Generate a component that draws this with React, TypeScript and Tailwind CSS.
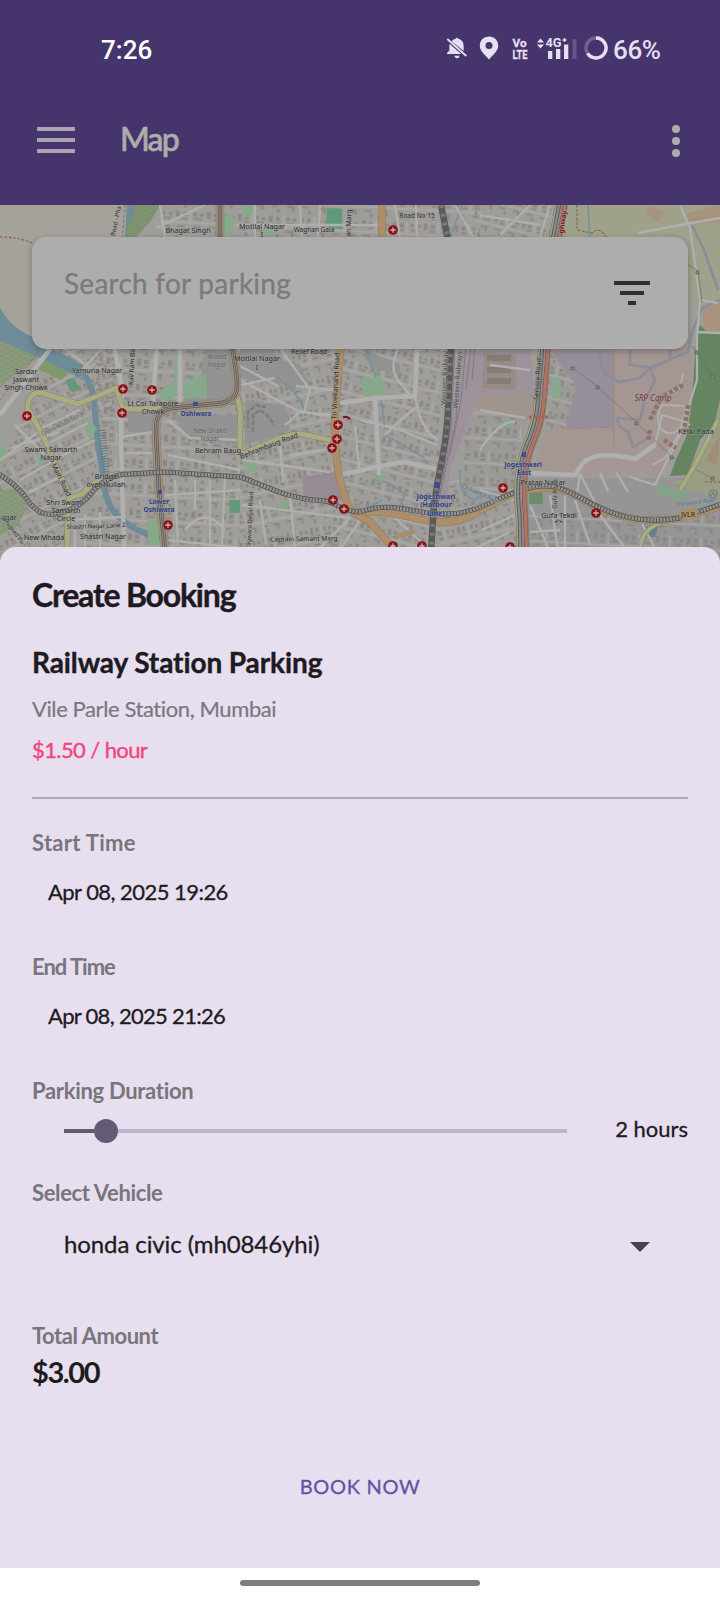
import React from "react";

type Pt = [number, number];

const HOSPITALS: Pt[] = [
  [393, 230], [123, 389], [152, 390], [122, 413], [27, 416], [338, 425], [337, 439], [332, 448],
  [333, 500], [344, 509], [168, 525], [503, 488], [596, 513], [393, 546], [422, 546], [510, 547],
];

type Label = { t: string; x: number; y: number; r?: number; s?: number; c?: string; b?: boolean; i?: boolean };

const DARK = "#2b2b2e";
const BLUE = "#2f3c86";
const MUTED = "#5f5f66";

const LABELS: Label[] = [
  { t: "Bhagat Singh", x: 188, y: 233 },
  { t: "Motilal Nagar", x: 262, y: 229 },
  { t: "I", x: 262, y: 237 },
  { t: "Wagnan Gala", x: 314, y: 232, s: 6.5 },
  { t: "Road No 15", x: 417, y: 218, s: 6.5 },
  { t: "Road - Pha", x: 116, y: 223, r: -78, s: 6 },
  { t: "an Marg", x: 349, y: 225, r: -88, s: 7 },
  { t: "ghway", x: 563, y: 224, r: -82, s: 7, c: "#7a1f22", b: true },
  { t: "Anand", x: 217, y: 359, s: 6.5, c: MUTED, i: true },
  { t: "Nagar", x: 217, y: 367, s: 6.5, c: MUTED, i: true },
  { t: "Relief Road", x: 309, y: 354, s: 6.8 },
  { t: "Motilal Nagar", x: 257, y: 361 },
  { t: "I", x: 257, y: 370 },
  { t: "Sardar", x: 26, y: 374 },
  { t: "Jaswant", x: 26, y: 382 },
  { t: "Singh Chowk", x: 26, y: 390 },
  { t: "Yamuna Nagar", x: 97, y: 373 },
  { t: "Kav Ram Ba", x: 132, y: 369, r: -87, s: 6.5 },
  { t: "Lt Col Tarapore", x: 153, y: 406 },
  { t: "Chowk", x: 153, y: 414 },
  { t: "Oshiwara", x: 196, y: 416, c: BLUE, b: true, s: 6.6 },
  { t: "Cross Road No 3", x: 62, y: 426, r: -27, s: 6, c: MUTED },
  { t: "New Shakti", x: 210, y: 433, s: 6.5, c: MUTED },
  { t: "Nagar", x: 210, y: 441, s: 6.5, c: MUTED },
  { t: "Behram Baug", x: 218, y: 453 },
  { t: "Swami Samarth", x: 51, y: 452 },
  { t: "Nagar", x: 51, y: 460 },
  { t: "Main Road", x: 61, y: 482, r: 64, s: 7.2 },
  { t: "Bridge", x: 106, y: 479 },
  { t: "over Nullah", x: 106, y: 487 },
  { t: "Behrambaug Road", x: 269, y: 448, r: -21, s: 7 },
  { t: "Tn Vivekanand Road", x: 336, y: 388, r: -87, s: 7 },
  { t: "Shri Swami", x: 65, y: 505 },
  { t: "Samarth", x: 66, y: 513 },
  { t: "Circle", x: 66, y: 521 },
  { t: "agar", x: 9, y: 520 },
  { t: "Lower", x: 159, y: 504, c: BLUE, b: true, s: 6.6 },
  { t: "Oshiwara", x: 159, y: 512, c: BLUE, b: true, s: 6.6 },
  { t: "Shastri Nagar Lane 2", x: 96, y: 528, r: -2, s: 6 },
  { t: "New Mhada", x: 44, y: 540 },
  { t: "Shastri Nagar", x: 103, y: 539 },
  { t: "Janupied Pu", x: 13, y: 532, r: 53, s: 6 },
  { t: "agwara Desai Road", x: 250, y: 521, r: -87, s: 6 },
  { t: "Captain Samant Marg", x: 304, y: 541, r: -1, s: 6.6 },
  { t: "Western Railway", x: 445, y: 380, r: -88, s: 7, c: "#4b4b50" },
  { t: "Western Railways", x: 458, y: 382, r: -86, s: 7, c: "#4b4b50" },
  { t: "Jogeshwari", x: 436, y: 499, c: BLUE, b: true, s: 7 },
  { t: "(Harbour", x: 436, y: 507, c: BLUE, b: true, s: 7 },
  { t: "Line)", x: 436, y: 516, c: BLUE, b: true, s: 7 },
  { t: "Jogeshwari", x: 523, y: 467, c: BLUE, b: true, s: 6.8 },
  { t: "East", x: 524, y: 475, c: BLUE, b: true, s: 6.8 },
  { t: "Service Road", x: 538, y: 381, r: -86, s: 7 },
  { t: "Oshiwara River", x: 481, y: 496, r: 24, s: 6, c: "#48718f", i: true },
  { t: "Pratap Nagar", x: 543, y: 485 },
  { t: "Gufa Road", x: 555, y: 496, r: -88, s: 6 },
  { t: "Gufa Tekdi", x: 559, y: 518 },
  { t: "SRP Camp", x: 653, y: 401, c: "#7d3032", i: true, s: 8.2 },
  { t: "Ketki Pada", x: 696, y: 434 },
  { t: "Oshiwara River", x: 696, y: 504, r: -7, s: 6, c: "#48718f", i: true },
];

/** Street grid with irregular building footprints, used as a district texture. */
function Blocks({ id, angle, w, h }: { id: string; angle: number; w: number; h: number }) {
  return (
    <pattern id={id} width={w} height={h} patternUnits="userSpaceOnUse" patternTransform={`rotate(${angle})`}>
      <path d={`M0 ${h / 2}H${w}M${w / 2} 0V${h / 2}`} stroke="#a9a9a8" strokeWidth="1.5" />
      <g fill="#8c8782">
        <rect x="1" y="1" width={w * 0.12} height={h * 0.26} />
        <rect x={w * 0.26} y="2" width={w * 0.12} height={h * 0.16} />
        <rect x={w * 0.24} y={h * 0.31} width={w * 0.17} height={h * 0.08} />
        <rect x={w * 0.6} y="2" width={w * 0.1} height={h * 0.14} />
        <rect x={w * 0.8} y="3" width={w * 0.12} height={h * 0.11} />
        <rect x={w * 0.62} y={h * 0.3} width={w * 0.25} height={h * 0.08} />
        <rect x="3" y={h * 0.62} width={w * 0.23} height={h * 0.07} />
        <rect x={w * 0.28} y={h * 0.77} width={w * 0.09} height={h * 0.14} />
        <path d={`M${w * 0.6} ${h * 0.62}h${w * 0.25}v${h * 0.22}h-${w * 0.08}v-${h * 0.14}h-${w * 0.17}z`} />
      </g>
    </pattern>
  );
}

function Road({ d, c, w, edge = "#817e74" }: { d: string; c: string; w: number; edge?: string }) {
  return (
    <>
      <path d={d} stroke={edge} strokeWidth={w + 1} />
      <path d={d} stroke={c} strokeWidth={w} />
    </>
  );
}

function Metro({ d, w = 5 }: { d: string; w?: number }) {
  return (
    <>
      <path d={d} stroke="#4f4f4f" strokeWidth={w} />
      <path d={d} stroke="#969696" strokeWidth={w - 1.4} />
      <path d={d} stroke="#565656" strokeWidth={w - 1.6} strokeDasharray="1.2 2" />
    </>
  );
}

function CityMap() {
  const west = "M220 205V237M232 345L236 372C239 392 236 400 222 403L172 408C158 410 156 418 156 432L159 492L165 550";
  const svRoad = "M382 205V242L341 346L335 415C334 455 338 480 348 505Q353 514 372 512C405 512 420 523 446 522C478 521 490 499 520 492C548 485 560 487 580 498C612 518 640 523 676 519L722 506";
  const metro = "M-2 474Q12 481 24 495Q37 517 54 514Q76 511 90 495Q106 474 130 474L165 472L240 477C268 486 285 499 325 501C338 504 345 512 360 512C395 500 415 515 445 514C478 514 494 498 520 491C550 479 566 490 590 503C622 520 650 523 680 518L722 504";
  const highway = "M562 203L555 240L545 345L540 405Q538 425 529 445C520 468 519 490 522 515L523 550";
  const major = "M114 345L122 390L121 440L124 550M157 345L153 402M180 345V402M50 349L0 415M340 403L375 398L415 396L417 350M375 398L379 475M340 475L380 466L405 462L436 469M530 473L575 475L583 463Q596 450 635 459L655 445";
  const white = [
    "M122 437L152 432M125 453H155M125 412V405",
    "M205 205L156 228M160 205L165 237M300 205L302 237M320 205L318 237M255 205V237M236 225H380",
    "M415 396Q420 430 438 440M335 415L300 412L240 380",
    "M415 408L395 425L385 435M360 420L400 430L437 445M355 425L359 470",
    "M278 345L310 390L304 412L335 417M275 378L240 385M240 366L278 386M302 410L285 425M296 386L333 390",
    "M243 460L330 472M280 440L283 482M290 455L325 450M242 505L350 518L320 548M260 500L266 545M290 497L295 550",
    "M360 520L340 550M395 518L430 550M400 345Q388 368 398 380L410 395",
    "M395 205L400 237M416 205L417 237M455 205L475 240M480 215L540 225M550 205L540 237M500 235L530 205",
    "M480 410L525 418M480 450Q500 420 515 422M482 530L515 515M478 547L510 532M480 490L515 500M490 365L530 370",
    "M530 505L548 548M550 495L558 550M565 495V550M575 500L590 545M530 532L560 530M600 515L625 548M580 474L600 512M640 520L655 548",
    "M655 445L662 415L680 420L690 425M600 473L608 491M616 472L628 492M580 475L576 500",
    "M637 233L720 218M680 205L690 228L700 300L718 303M700 300L697 335L697 380L680 435L655 485M697 332L720 333M655 485L630 477",
    "M168 420L190 438L240 440M168 455L240 470M175 480L178 545M195 480V510M210 480V550M225 478L222 545M168 540L240 548M165 495L240 490M185 530Q205 505 225 530",
    "M60 345L95 372M105 345L80 372M38 430L80 410M45 445L88 423M53 460L95 440M20 480L55 460M30 492L62 476M68 520L122 517M75 530V550M85 515V550M100 512V550M10 448L60 432M15 425L45 455M0 460L38 432",
  ].join("");

  return (
    <svg className="block h-[362px] w-[720px]" viewBox="0 205 720 362" fill="none" strokeLinejoin="round">
      <defs>
        <Blocks id="blk-a" angle={-27} w={27} h={21} />
        <Blocks id="blk-b" angle={3} w={31} h={25} />
        <Blocks id="blk-c" angle={-12} w={24} h={29} />
        <Blocks id="blk-d" angle={14} w={28} h={22} />
        <pattern id="swamp" width="9" height="5" patternUnits="userSpaceOnUse">
          <path d="M0 1H5M4 3.5H9" stroke="#738f68" strokeWidth="0.7" />
        </pattern>
      </defs>
      <rect x="0" y="205" width="720" height="362" fill="#9f9d99" />

      <path d="M45 345H115V400L95 470L60 550H0V470L30 395Z" fill="url(#blk-a)" />
      <path d="M95 345H240V567H70L100 480Z" fill="url(#blk-b)" />
      <path d="M160 205H480V240H160Z" fill="url(#blk-b)" />
      <path d="M240 345H335V567H240Z" fill="url(#blk-c)" />
      <path d="M340 345H440V567H330Z" fill="url(#blk-d)" />
      <path d="M475 205H560V240H475Z" fill="url(#blk-d)" />
      <path d="M450 480H520V567H430Z" fill="url(#blk-c)" />
      <path d="M525 478H720V567H525Z" fill="#959595" />
      <path d="M525 515H720V567H525Z" fill="url(#blk-b)" />

      <path d="M0 205H124L120 345H36L12 334L0 305Z" fill="#a5a29b" />
      <path d="M205 350H232V402L180 404L200 380ZM172 415H240V445L190 440ZM240 345L275 350L280 385L240 378ZM245 400L285 405L290 430L245 445ZM250 350L300 365L310 385L290 390L262 370ZM365 350L400 365V375L370 368ZM128 405L155 413V432H128Z" fill="#929293" />
      <path d="M248 428V412L256 405L266 407M253 432V415L260 410L270 418L274 425" stroke="#7f7c79" strokeWidth="2.6" strokeDasharray="5 1.5" />
      <path d="M302 477L336 472L340 500L304 497Z" fill="#968a93" />
      <path d="M478 345L530 345L535 400L475 405L450 470L446 510H438L450 430L460 345Z" fill="#9d929b" />
      <path d="M478 395L535 390L530 420L475 415Z" fill="#a0948f" />
      <path d="M465 430L475 410L525 420L515 495L462 508Z" fill="#9c9a97" />
      <path d="M465 430L475 410L525 420L515 495L462 508Z" fill="url(#blk-b)" />

      <path d="M550 345H692V395L690 425L660 478L640 472L600 476L532 472L548 425Z" fill="#a49692" />
      <path d="M568 345H614V428H566L576 390L550 352Z" fill="#978e9b" />
      <path d="M550 350L576 385L566 428L545 432Z" fill="#9c9b97" />
      <path d="M550 350L576 385L566 428L545 432Z" fill="url(#blk-d)" />
      <path d="M614 345V447M566 429L612 427" stroke="#a9807b" strokeWidth="0.8" />
      <path d="M484 352L516 355L515 390L482 388Z" fill="#968b85" />
      <path d="M487 358H511M487 370H511M487 381H511" stroke="#857c77" strokeWidth="6" />

      <path d="M564 205H720V312L688 300V237H560Z" fill="#9fa18b" />
      <path d="M650 206L665 212L658 222L645 214ZM686 214L720 205V222L690 225ZM703 306L720 303V335L703 330Z" fill="#a7937d" />
      <path d="M707 332L720 334V400L714 425L700 440L688 475L670 476L676 460L688 432L692 400L696 340L700 325Z" fill="#648560" />
      <path d="M720 405L712 440L688 478L670 482L720 500Z" fill="#9b9d82" />
      <path d="M720 434L706 460L717 466Z" fill="#a38d78" />
      <path d="M655 481L670 489L692 492L680 500L660 496Z" fill="#82a387" />

      <path d="M133 205H160L150 222L133 240H124Z" fill="#7f9271" />
      <path d="M0 335L22 344L38 358L14 375L0 388ZM0 490L22 488L28 505L18 525L0 535Z" fill="#8b9a7c" />
      <path d="M0 335L22 344L38 358L14 375L0 388ZM0 490L22 488L28 505L18 525L0 535ZM133 205H160L150 222L133 240H124Z" fill="url(#swamp)" />
      <path d="M43 360L70 372L60 380L36 368Z" fill="#7e9a6a" />
      <path d="M0 322Q14 334 36 344Q70 360 82 372Q93 385 94 402L98 445L104 480Q104 498 114 512Q134 534 162 537" stroke="#6e8b98" strokeWidth="6" />
      <path d="M0 308Q12 330 36 338L48 348Q70 356 84 366L80 378Q60 368 40 358L0 340Z" fill="#6e8b98" />
      <path d="M127 205H135Q130 222 125 238" fill="#6e8b98" />
      <path d="M102 430L106 472" stroke="#587487" strokeWidth="8" strokeDasharray="0.8 1.8" />
      <path d="M462 205L450 238M588 205L590 237M278 378Q300 395 304 410M385 435L425 458M460 470Q458 495 475 500L485 490M373 480Q390 480 405 495L400 505M385 430Q380 378 365 350M382 500L365 510" stroke="#7492a0" strokeWidth="1.6" />

      <g fill="#86a88b">
        <path d="M221 215H233V233H221ZM0 440L8 455L0 465ZM157 395L175 380V345H183L182 390L168 402ZM184 382L206 374L207 398L184 398ZM82 415L97 428L90 440ZM360 379L382 376L384 395L364 398ZM244 462L258 460L256 473L246 471ZM276 505L290 500L286 514ZM148 520V545H160L158 520ZM372 472L386 475L380 483ZM552 380L560 378L561 398L551 397ZM503 419H511V428H504Z" />
        <path d="M243 205H252V217H243ZM265 222H276V234H265ZM35 450L47 460L40 468Z" />
      </g>
      <path d="M327 208L342 209V229L326 227ZM66 380L74 378L80 390L70 391ZM229 500H240V513H230Z" fill="#5f9a7c" />
      <path d="M530 488L543 493V504H529Z" fill="#6a8d6d" />
      <path d="M645 527H658L655 537H643Z" fill="#62808e" />

      <g stroke="#8a8c97" strokeWidth="2.6">
        <path d="M600 350Q598 375 620 382L640 378L650 368L688 352L692 332L702 308L720 300M650 368L655 380L645 400L640 420L618 418Q615 425 628 432L633 447L645 440M630 350V365L655 368M692 225L704 250L718 290M670 350V360" />
      </g>

      <path d={white} stroke="#afafae" strokeWidth="2.3" />
      <path d={major} stroke="#b0b0af" strokeWidth="4.6" />
      <path d="M662 405Q655 415 660 428Q672 440 682 425L686 406L662 405M652 465L665 458L680 432M683 374L680 388L665 395" stroke="#b0b0af" strokeWidth="1.8" />
      <path d="M683 385L660 398M660 400L650 420M650 430L648 440M688 405L684 430M664 440L676 448" stroke="#8d726a" strokeWidth="4.5" strokeDasharray="4 2" />
      <path d="M573 368L598 387L637 423L672 457L712 478" stroke="#78706f" strokeWidth="0.7" />
      <path d="M688 265L698 271L702 303M692 346L716 380" stroke="#666a66" strokeWidth="0.7" />
      <g stroke="#626262" strokeWidth="0.9" fill="#8d8b89">
        <path d="M571 367h3v3h-3zM596 386h3v3h-3zM635 422h3v3h-3zM670 456h3v3h-3zM711 477h3v3h-3zM696 271h3v3h-3zM695 351h3v3h-3zM711 375h3v3h-3z" />
      </g>

      <path d="M0 237Q22 237 36 245M577 205V230L592 233Q600 226 606 237M705 482H720" stroke="#94583f" strokeWidth="1.1" strokeDasharray="2.500 1.800" />
      <path d="M125 205L122 240M0 400L40 350" stroke="#8c774f" strokeWidth="1" strokeDasharray="3 2" />

      <Road d="M27 420L28 403Q32 390 42 393L78 404L116 388L122 406Q125 410 140 409L225 403L240 398" c="#a9ab80" w={5} />
      <Road d="M29 410L45 440L62 480Q72 495 68 512L67 550M70 498L82 494Q100 474 125 474L160 473" c="#a9ab80" w={5} />
      <Road d="M240 455L270 442Q290 433 302 434L331 440M234 390Q242 405 240 425L240 455" c="#a9ab80" w={5} />
      <Road d="M718 420L695 465L680 490M640 548Q642 530 660 523" c="#a9ab80" w={4} />
      <Road d={svRoad} c="#af8e67" w={6.5} />
      <Road d="M352 512L370 522L395 550" c="#af8e67" w={6.5} />
      <path d="M395 537L415 531" stroke="#a4906f" strokeWidth="5" />
      <Road d={west} c="#ac9070" w={7.5} />
      <path d={west} stroke="#555" strokeWidth="4.4" />
      <path d={west} stroke="#8f8f8f" strokeWidth="3" />
      <path d={west} stroke="#555" strokeWidth="0.8" />
      <Metro d={metro} />

      <path d="M441 205L448 240M451 345L448 410Q447 440 438 480L434 505L431 550" stroke="#5a5a5c" strokeWidth="6.5" />
      <path d="M441 205L448 240M451 345L448 410Q447 440 438 480L434 505L431 550" stroke="#7b7a7a" strokeWidth="4.5" strokeDasharray="3 6" />
      <path d="M455 345L451 430L438 505M460 345L456 420L440 495M466 345L461 400L450 455M471 345L466 390M475 345L472 380" stroke="#807a82" strokeWidth="1" />

      <path d={highway} stroke="#7f7d72" strokeWidth="13" />
      <path d={highway} stroke="#a5a682" strokeWidth="11.5" />
      <path d={highway} stroke="#555" strokeWidth="7" transform="translate(-1 0)" />
      <path d={highway} stroke="#8d8d8d" strokeWidth="5.2" transform="translate(-1 0)" />
      <path d={highway} stroke="#555" strokeWidth="0.9" transform="translate(-1 0)" />
      <path d={highway} stroke="#8c5245" strokeWidth="4.4" transform="translate(3.500 0)" />
      <path d={highway} stroke="#ae7566" strokeWidth="3.2" transform="translate(3.500 0)" />
      <path d="M529 417H548" stroke="#a6645b" strokeWidth="3" strokeDasharray="3 1" />

      <path d="M679 511L697 507L698 518L681 521Z" fill="#a89064" />
      <text x="688" y="517" fontSize="7" fill={DARK} textAnchor="middle" className="font-['Noto_Sans',sans-serif]">JVLR</text>
      <path d="M554 523a5 5 0 0 1 9 0l-3-1.500-1.500-2-1.500 2z" fill="#222" />
      <path d="M434 482h6v6h-6zM193 402h5v4h-5zM158 490h4v4h-4zM522 452h4v5h-4z" fill="#3e4f8c" />
      <circle cx="713" cy="494" r="4" stroke="#4d6c91" strokeWidth="0.8" />
      <path d="M711 496l2-4 2 4" stroke="#4d6c91" strokeWidth="0.8" />

      {LABELS.map((l, k) => (
        <text
          key={k}
          x={l.x}
          y={l.y}
          fontSize={l.s ?? 7.2}
          fill={l.c ?? DARK}
          stroke="#a6a5a2"
          strokeWidth="1.2"
          strokeOpacity="0.6"
          paintOrder="stroke"
          textAnchor="middle"
          fontWeight={l.b ? 700 : 400}
          fontStyle={l.i ? "italic" : "normal"}
          transform={l.r ? `rotate(${l.r} ${l.x} ${l.y - 2})` : undefined}
          className="font-['Noto_Sans',sans-serif]"
        >
          {l.t}
        </text>
      ))}

      <path d="M343 417.500q4-2 7 1.500" stroke="#8a0d12" strokeWidth="2" />
      {HOSPITALS.map(([x, y]) => (
        <g key={`${x}-${y}`}>
          <circle cx={x} cy={y} r="4.800" fill="#8c0f14" />
          <path d={`M${x - 2.7} ${y}h5.400M${x} ${y - 2.7}v5.400`} stroke="#c5b3b3" strokeWidth="1.300" />
        </g>
      ))}
    </svg>
  );
}

function StatusBar() {
  return (
    <div className="flex h-[96px] items-center pl-[101px] pr-[59px] font-['Roboto',sans-serif] text-[#e6dff2]">
      <span className="w-[345px] pt-[3px] text-[26px] font-medium leading-8 text-white">7:26</span>
      <svg className="h-[22px] w-[22px] shrink-0" viewBox="0 0 66 66" fill="currentColor">
        <path d="M20 10Q24 6 29 5Q33 -1 37 5Q53 9 53 27V42L17 13Z" />
        <path d="M11 21L46 51H3V48L10 41V27Q10 24 11 21Z" />
        <path d="M25 56H41Q38 64 33 64T25 56Z" />
        <path d="M4 6L61 57" stroke="currentColor" strokeWidth="5.500" fill="none" />
      </svg>
      <svg className="ml-[11px] h-[24px] w-[20px] shrink-0" viewBox="0 0 20 24" fill="currentColor">
        <path fillRule="evenodd" d="M10 0.500C4.700 0.500 0.800 4.400 0.800 9.500C0.800 15.500 7 19.500 10 23.500C13 19.500 19.200 15.500 19.200 9.500C19.200 4.400 15.300 0.500 10 0.500ZM10 6A3.500 3.500 0 1 1 10 13A3.500 3.500 0 1 1 10 6Z" />
      </svg>
      <svg className="ml-[12px] h-[30px] w-[18px] shrink-0" viewBox="0 0 18 30" fill="currentColor" fontWeight="700">
        <text x="1.500" y="13.500" fontSize="11" textLength="14" lengthAdjust="spacingAndGlyphs" stroke="currentColor" strokeWidth="0.300">Vo</text>
        <text x="1.500" y="25.500" fontSize="12" textLength="15" lengthAdjust="spacingAndGlyphs" stroke="currentColor" strokeWidth="0.300">LTE</text>
      </svg>
      <svg className="ml-[7px] h-[26px] w-[42px] shrink-0" viewBox="0 0 42 26" fill="currentColor">
        <path d="M1 7.500L4.500 3.500L8 7.500ZM1 9.500H8L4.500 13.500Z" />
        <text x="9.500" y="12" fontSize="13" fontWeight="700" textLength="16" lengthAdjust="spacingAndGlyphs">4G</text>
        <path d="M26.500 5h4M28.500 3v4" stroke="currentColor" strokeWidth="1.300" />
        <path d="M12 16h4.300v8h-4.300zM20 14h4.300v10h-4.300zM28 9.500h4.300v14.500h-4.300z" />
        <path d="M36.500 4h4v20h-4z" opacity="0.200" />
      </svg>
      <svg className="ml-[6px] h-[24px] w-[24px] shrink-0" viewBox="0 0 24 24" fill="none" strokeWidth="3.400">
        <circle cx="12" cy="12" r="10" stroke="#6f6193" />
        <path d="M12 2A10 10 0 1 1 3.600 17.400" stroke="#e6dff2" />
      </svg>
      <span className="ml-[5px] pt-[3px] text-[26px] font-medium leading-8 tracking-[-0.4px]">66%</span>
    </div>
  );
}

function AppBar() {
  return (
    <div className="flex h-[109px] items-center pb-[23px] pl-[37px] pr-[40px] text-[#adadad]">
      <div className="mt-[2px] flex h-[26px] w-[38px] flex-col justify-between">
        <span className="h-[4px] bg-[#a9a3b3]" />
        <span className="h-[4px] bg-[#a9a3b3]" />
        <span className="h-[4px] bg-[#a9a3b3]" />
      </div>
      <h1 className="ml-[45px] flex-1 text-[32px] font-medium leading-10 tracking-[-1.8px] [-webkit-text-stroke:0.6px_#adadad]">Map</h1>
      <div className="mt-[4px] flex flex-col gap-1">
        <span className="h-2 w-2 rounded-full bg-[#adadad]" />
        <span className="h-2 w-2 rounded-full bg-[#adadad]" />
        <span className="h-2 w-2 rounded-full bg-[#adadad]" />
      </div>
    </div>
  );
}

function SearchCard() {
  return (
    <div className="absolute left-8 top-8 flex h-[112px] w-[656px] items-center justify-between rounded-[14px] bg-[#adadad] pl-8 pr-[38px] shadow-[0_2px_6px_rgba(0,0,0,0.28)]">
      <span className="pb-[20px] text-[28px] leading-9 tracking-[0.25px] text-[#7b7b7b] [-webkit-text-stroke:0.3px_#7b7b7b]">Search for parking</span>
      <div className="flex flex-col items-center gap-[6px] pb-[1px]">
        <span className="h-[4px] w-[36px] bg-[#2f2f33]" />
        <span className="h-[4px] w-[24px] bg-[#2f2f33]" />
        <span className="h-[4px] w-[8px] bg-[#2f2f33]" />
      </div>
    </div>
  );
}

function BookingSheet() {
  return (
    <section className="relative -mt-5 h-[1021px] rounded-t-[16px] bg-[#e7def0] px-8 pt-[26px] text-[#1d1b20]">
      <h2 className="h-[69px] text-[32px] font-bold leading-[44px] tracking-[-1.2px] [-webkit-text-stroke:0.4px_#1d1b20]">Create Booking</h2>
      <h3 className="h-[50px] text-[28px] font-bold leading-[40px] tracking-[-0.1px] [-webkit-text-stroke:0.4px_#1d1b20]">Railway Station Parking</h3>
      <p className="h-[41px] pt-px text-[22px] leading-8 tracking-[-0.4px] text-[#7a777d] [-webkit-text-stroke:0.2px_#7a777d]">Vile Parle Station, Mumbai</p>
      <p className="h-[64px] pt-px text-[22px] leading-8 tracking-[-0.6px] text-[#f3457f] [-webkit-text-stroke:0.4px_#f3457f]">$1.50 / hour</p>
      <hr className="h-[2px] border-0 bg-[#aeaab1]" />
      <div className="h-[124px] pt-[28px]">
        <div className="text-[22px] font-bold leading-8 tracking-[0.3px] text-[#78757b]">Start Time</div>
        <div className="mt-[17px] pl-4 text-[22px] leading-8 tracking-[-0.55px] [-webkit-text-stroke:0.3px_#1d1b20]">Apr 08, 2025 19:26</div>
      </div>
      <div className="h-[124px] pt-[28px]">
        <div className="text-[22px] font-bold leading-8 tracking-[-1px] text-[#78757b]">End Time</div>
        <div className="mt-[17px] pl-4 text-[22px] leading-8 tracking-[-0.7px] [-webkit-text-stroke:0.3px_#1d1b20]">Apr 08, 2025 21:26</div>
      </div>
      <div className="h-[102px] pt-[28px]">
        <div className="text-[22px] font-bold leading-8 tracking-[-0.3px] text-[#78757b]">Parking Duration</div>
        <div className="flex items-start justify-between pl-8 pt-[5px]">
          <div className="mt-[7px] flex h-6 w-[503px] items-center">
            <span className="h-1 w-[30px] bg-[#655a70]" />
            <span className="h-6 w-6 rounded-full bg-[#655a74]" />
            <span className="h-1 flex-1 bg-[#bfb5ca]" />
          </div>
          <span className="mt-[1px] text-[22px] leading-8 [-webkit-text-stroke:0.3px_#1d1b20]">2 hours</span>
        </div>
      </div>
      <div className="h-[143px] pt-[28px]">
        <div className="text-[22px] font-bold leading-8 tracking-[-0.35px] text-[#78757b]">Select Vehicle</div>
        <div className="mt-[17px] flex items-center justify-between pl-8 pr-[38px]">
          <span className="text-[24px] leading-9 tracking-[-0.1px] [-webkit-text-stroke:0.3px_#1d1b20]">honda civic (mh0846yhi)</span>
          <svg className="mt-[6px] h-[10px] w-5" viewBox="0 0 20 10"><path d="M0 0H20L10 10Z" fill="#49414f" /></svg>
        </div>
      </div>
      <div className="h-[128px] pt-[28px]">
        <div className="text-[22px] font-bold leading-8 tracking-[-0.45px] text-[#78757b]">Total Amount</div>
        <div className="text-[29px] font-bold leading-[40px] tracking-[-1.4px]">$3.00</div>
      </div>
      <button className="mx-auto mt-[50px] block text-[20px] leading-8 tracking-[0.7px] text-[#64529f] [-webkit-text-stroke:0.3px_#64529f]">BOOK NOW</button>
    </section>
  );
}

export default function App() {
  return (
    <main className="h-[1600px] w-[720px] overflow-hidden bg-white font-['Lato',sans-serif] [font-variant-ligatures:none]">
      <header className="h-[205px] bg-[#45356c]">
        <StatusBar />
        <AppBar />
      </header>
      <div className="relative h-[362px]">
        <CityMap />
        <SearchCard />
      </div>
      <BookingSheet />
      <footer className="flex h-8 justify-center bg-white pt-3">
        <span className="h-[6px] w-[240px] rounded-full bg-[#808080]" />
      </footer>
    </main>
  );
}
